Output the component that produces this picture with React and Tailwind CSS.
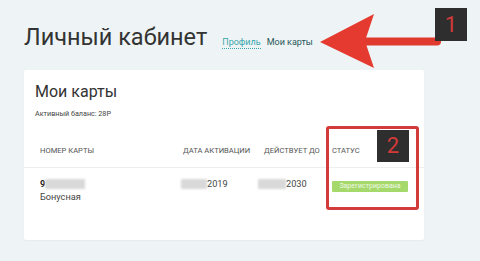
import React from "react";

function Blur({ w }) {
  return <span className="inline-block h-[10px] bg-[#d9d9d9] blur-[1px]" style={{ width: w }} />;
}

export default function App() {
  return (
    <div className="relative w-[480px] h-[261px] overflow-hidden bg-[#eef4f5] font-['Roboto',sans-serif]">
      <div className="flex items-baseline pl-[24px] pt-[22px] h-[70px]">
        <h1 className="text-[23.5px] leading-[30px] text-[#333] font-normal">Личный кабинет</h1>
        <a className="ml-[15px] text-[9px] text-[#3aa6ad] border-b border-dotted border-[#3aa6ad] leading-[12px]">Профиль</a>
        <span className="ml-[6px] text-[9px] text-[#2a5558] leading-[12px]">Мои карты</span>
      </div>
      <div className="mx-[24px] w-[400px] h-[170px] bg-white rounded-[2px] shadow-[0_1px_2px_rgba(0,0,0,0.04)] pt-[12px]">
        <div className="pl-[11px] text-[16px] leading-[20px] text-[#333]">Мои карты</div>
        <div className="pl-[11px] mt-[7px] text-[7.2px] leading-[10px] text-[#444]">Активный баланс: 28Р</div>
        <div className="mt-[26px] flex text-[7.6px] leading-[12px] text-[#555] pl-[16px] pb-[10px] border-b border-[#eee]">
          <div className="w-[143px]">НОМЕР КАРТЫ</div>
          <div className="w-[81px]">ДАТА АКТИВАЦИИ</div>
          <div className="w-[68px]">ДЕЙСТВУЕТ ДО</div>
          <div>СТАТУС</div>
        </div>
        <div className="flex pl-[16px] pt-[10px] text-[9.2px] text-[#444]">
          <div className="w-[143px]">
            <div className="flex items-center h-[12px]"><span className="font-bold text-[#222]">9</span><Blur w={40} /></div>
            <div className="mt-[1px] leading-[12px]">Бонусная</div>
          </div>
          <div className="w-[81px] -ml-[2px]">
            <div className="flex items-center h-[12px]"><Blur w={26} /><span>2019</span></div>
          </div>
          <div className="w-[68px] -ml-[4px]">
            <div className="flex items-center h-[12px]"><Blur w={28} /><span>2030</span></div>
          </div>
          <div className="ml-[6px]">
            <span className="inline-block w-[76px] text-center bg-[#a5d96c] text-[#eef8e4] text-[7px] leading-[11px] rounded-[1px] whitespace-nowrap">Зарегистрирована</span>
          </div>
        </div>
      </div>

      {/* red box */}
      <div className="absolute left-[326px] top-[126px] w-[93px] h-[84px] border-[3px] border-[#d33a3a] rounded-[3px]" />
      {/* badge 2 */}
      <div className="absolute left-[377px] top-[130px] w-[32px] h-[32px] bg-[#2e2e2e] flex items-center justify-center text-[#d33a3a] text-[22px] leading-none">2</div>
      {/* arrow */}
      <svg className="absolute left-0 top-0" width="480" height="80" viewBox="0 0 480 80">
        <line x1="364" y1="41.5" x2="437" y2="41.5" stroke="#e03a2f" strokeWidth="8" strokeLinecap="round" />
        <polygon points="320,42 374,14 365,41 374,68" fill="#e53a2f" />
      </svg>
      {/* badge 1 */}
      <div className="absolute left-[435px] top-[8px] w-[32px] h-[33px] bg-[#2e2e2e] flex items-center justify-center text-[#d33a3a] text-[22px] leading-none">1</div>
    </div>
  );
}
